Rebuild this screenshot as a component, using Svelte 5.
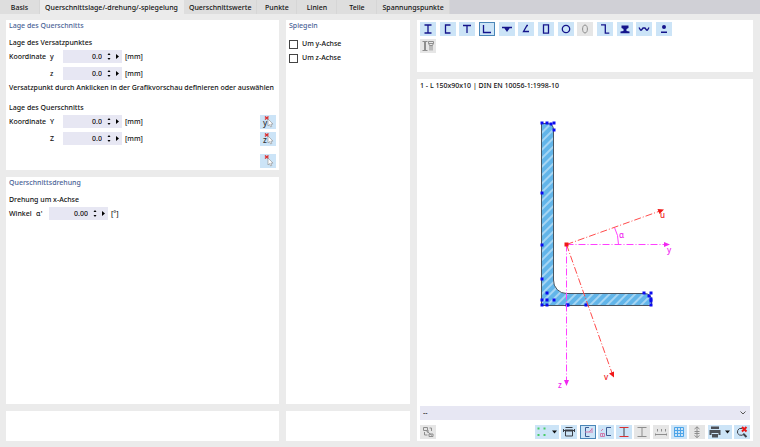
<script lang="ts">
  let activeTab = $state("Querschnittslage/-drehung/-spiegelung");
  let activeShape = $state("angle");
  let mirrorY = $state(false);
  let mirrorZ = $state(false);

  const tabs = [
    "Basis",
    "Querschnittslage/-drehung/-spiegelung",
    "Querschnittswerte",
    "Punkte",
    "Linien",
    "Teile",
    "Spannungspunkte",
  ];

  const offsetRows = [
    { id: "offset-y", label: "Koordinate", axis: "y" },
    { id: "offset-z", label: "", axis: "z" },
  ];
  const positionRows = [
    { id: "pos-y", label: "Koordinate", axis: "Y" },
    { id: "pos-z", label: "", axis: "Z" },
  ];

  // icons are drawn on a 16 x 14 grid
  const shapes = [
    { key: "i", name: "I-Profil", d: "M4.5 3h7M4.5 11h7M8 3v8" },
    { key: "channel", name: "U-Profil", d: "M10.5 3H5.5v8h5" },
    { key: "tee", name: "T-Profil", d: "M4 3.5h8M8 4v7" },
    { key: "angle", name: "Winkel", d: "M4.5 3v7.5H12" },
    { key: "tee-flat", name: "T flach", d: "M3 5.5h10M6 6l1.500 2h1l1.500-2M8 6v3.500" },
    { key: "angle-open", name: "Winkel offen", d: "M10 3.500H9L5.500 9.500H11" },
    { key: "rect", name: "Rechteckrohr", d: "M5.5 2.8h5v8.4h-5z" },
    { key: "round", name: "Rundrohr", d: "M8 3.3a3.7 3.7 0 1 1 0 7.4a3.7 3.7 0 1 1 0-7.4z" },
    { key: "oval", name: "Oval", d: "M8 3c3.2 0 3.2 8 0 8s-3.2-8 0-8z", off: true },
    { key: "zed", name: "Z-Profil", d: "M4 2.8h4.3v8.4h4" },
    { key: "rail", name: "Schiene", d: "M4.500 3.500h7v2.500L9.500 7v2l3 .5v1.700h-9V9.500l3-.5V7l-2-1z", solid: true },
    { key: "wave", name: "Trapezblech", d: "M3 5.500l1.500 2.500h1L7 6h2l1.500 2h1L13 5.500" },
    { key: "bulb", name: "Verbund", d: "M5 9.500h6v1.500H5zM8 3a2 2 0 1 1 0 4a2 2 0 1 1 0-4z", solid: true },
  ];

  const points = [
    [542, 123], [547, 123], [551, 124], [554, 123], [554, 130],
    [542, 193], [542, 245], [542, 279],
    [547, 293], [542, 300], [547, 300], [554, 300],
    [542, 305], [547, 305], [567, 305], [568, 305], [586, 305], [651, 305],
    [644, 293], [651, 293], [649, 296], [651, 299], [651, 301],
  ];
</script>

{#snippet numberField(id, value)}
  <div class="number">
    <input {id} type="text" {value} />
    <div class="spin">
      <button aria-label="Erhöhen"><svg viewBox="0 0 4 2"><path d="M.5 2L2 0l1.500 2z" /></svg></button>
      <button aria-label="Verringern"><svg viewBox="0 0 4 2"><path d="M.5 0L2 2 3.500 0z" /></svg></button>
    </div>
    <button class="more" aria-label="Mehr"><svg viewBox="0 0 3 5"><path d="M0 0l3 2.500L0 5z" /></svg></button>
  </div>
{/snippet}

{#snippet pickIcon(letter)}
  <svg class="icon" viewBox="0 0 16 14">
    {#if letter}<text class="glyph" x="3" y="11">{letter}</text>{/if}
    <path class="red strong" d="M5 1.500l3.500 3M8.500 1.500L5 4.500" />
    <path class="cursor" d="M8 4v7l1.600-1.400 1 2.400 1.200-.5-1-2.400h2.200z" />
  </svg>
{/snippet}

<div class="window">
  <div class="tabs" role="tablist">
    {#each tabs as tab (tab)}
      <button
        class="tab"
        class:active={activeTab === tab}
        role="tab"
        aria-selected={activeTab === tab}
        onclick={() => (activeTab = tab)}>{tab}</button>
    {/each}
  </div>

  <main class="columns">
    <div class="column">
      <section class="panel">
        <h2>Lage des Querschnitts</h2>
        <h3>Lage des Versatzpunktes</h3>
        <div class="rows">
          {#each offsetRows as row (row.id)}
            <div class="row">
              <label for={row.id}><span>{row.label}</span><span>{row.axis}</span></label>
              {@render numberField(row.id, "0.0")}
              <span class="unit">[mm]</span>
            </div>
          {/each}
        </div>
        <p>Versatzpunkt durch Anklicken in der Grafikvorschau definieren oder auswählen</p>
        <h3 class="spaced">Lage des Querschnitts</h3>
        <div class="rows">
          {#each positionRows as row (row.id)}
            <div class="row">
              <label for={row.id}><span>{row.label}</span><span>{row.axis}</span></label>
              {@render numberField(row.id, "0.0")}
              <span class="unit">[mm]</span>
              <button class="tool pick" aria-label="Wählen {row.axis}">
                {@render pickIcon(row.axis.toLowerCase())}
              </button>
            </div>
          {/each}
        </div>
        <div class="row last">
          <button class="tool pick" aria-label="Punkt wählen">{@render pickIcon("")}</button>
        </div>
      </section>

      <section class="panel grow">
        <h2>Querschnittsdrehung</h2>
        <h3>Drehung um x-Achse</h3>
        <div class="rows">
          <div class="row">
            <label class="short" for="angle"><span>Winkel</span><span>α'</span></label>
            {@render numberField("angle", "0.00")}
            <span class="unit">[°]</span>
          </div>
        </div>
      </section>

      <section class="panel foot"></section>
    </div>

    <div class="column">
      <section class="panel grow">
        <h2>Spiegeln</h2>
        <div class="checks">
          <label class="check"><input type="checkbox" bind:checked={mirrorY} />Um y-Achse</label>
          <label class="check"><input type="checkbox" bind:checked={mirrorZ} />Um z-Achse</label>
        </div>
      </section>
      <section class="panel foot"></section>
    </div>

    <div class="column">
      <section class="panel shapes">
        <div class="shape-row">
          {#each shapes as s (s.key)}
            <button
              class="tool"
              class:selected={activeShape === s.key}
              disabled={s.off}
              aria-label={s.name}
              onclick={() => (activeShape = s.key)}
            >
              <svg class="icon navy" class:solid={s.solid} class:muted={s.off} viewBox="0 0 16 14">
                <path d={s.d} />
              </svg>
            </button>
          {/each}
        </div>
        <button class="tool" disabled aria-label="Zusammengesetzt">
          <svg class="icon muted" viewBox="0 0 16 14">
            <path d="M2.500 2.500h5M2.500 11.500h5M4.500 3v8M5.500 3v8M8.500 2.500h5v2l-1.500 2.500v4.500M8.500 2.500v2l1.500 2.500v4.500M8.500 4.500h5M10 6.500h2" />
          </svg>
        </button>
      </section>

      <section class="panel grow preview">
        <div class="caption">1 - L 150x90x10 | DIN EN 10056-1:1998-10</div>
        <svg class="drawing" viewBox="420 92 330 314">
          <defs>
            <pattern id="hatch" width="6" height="6" patternUnits="userSpaceOnUse" patternTransform="rotate(45)">
              <rect width="6" height="6" fill="#62b5e9" />
              <path d="M3 0v6" stroke="#e8f5fd" stroke-width="1" />
            </pattern>
          </defs>
          <path
            class="profile"
            d="M541.5 123.500H547Q553.500 123.500 553.500 130V280A13 13 0 0 0 566.500 293.500H644Q651.500 293.500 651.500 300V305.500H541.500Z"
          />
          {#each points as [x, y]}
            <rect class="point" x={x - 1.5} y={y - 1.5} width="3" height="3" />
          {/each}
          <g class="axis magenta">
            <path d="M566.500 244.500H666M566.500 244.500V381" />
            <path class="head" d="M670 244.500l-6-2.500v5zM566.500 386l-2.500-6h5z" />
            <path class="arc" d="M614.500 227.500Q618.500 235 618.500 244.500" />
            <text x="619" y="238">α</text>
            <text x="667" y="253">y</text>
            <text x="558" y="388">z</text>
          </g>
          <g class="axis red-axis">
            <path d="M566.500 244.500L660 211M566.500 244.500L612 373" />
            <path class="head" d="M664 209.500l-6.500-.5 2 5zM614 377.500l-5-4 5-2z" />
            <rect class="head" x="564.500" y="242.500" width="4" height="4" />
            <text x="660" y="218">u</text>
            <text x="604" y="380">v</text>
          </g>
        </svg>

        <div class="combo">
          <select aria-label="Darstellung">
            <option>--</option>
          </select>
          <svg viewBox="0 0 6 4"><path d="M.5.500L3 3 5.500.500" /></svg>
        </div>

        <div class="actions">
          <button class="tool" disabled aria-label="Tauschen">
            <svg class="icon muted" viewBox="0 0 16 14">
              <path d="M3.500 2.500h4v3h-4zM9.500 3h2v3M8 5v3M4.500 7v3h3M9 9h4v2.500H9zM6 5.500l6 5" />
            </svg>
          </button>
          <div class="view-tools">
            <button class="tool wide" aria-label="Punkte">
              <svg class="icon" viewBox="0 0 24 14">
                <path class="green" d="M2.500 3.500h2M8.500 3.500h2M2.500 10h2M8.500 10h2" />
                <path class="black" d="M17 5.500h5L19.500 8.500z" />
              </svg>
            </button>
            <button class="tool" aria-label="Bemaßung">
              <svg class="icon" viewBox="0 0 16 14">
                <path class="dark" d="M4.500 2.500h7M2.500 5.500h11M2.500 4v3M13.500 4v3M4.500 6v5h7V6" />
                <path class="dark thick" d="M4 5.500h8" />
              </svg>
            </button>
            <button class="tool selected" aria-label="Achsen">
              <svg class="icon" viewBox="0 0 16 14">
                <path class="blue" d="M9 2.500H5.500v9h4" />
                <path class="pink" d="M5 7h8M9 7l3-3M12 3v3" />
              </svg>
            </button>
            <button class="tool" aria-label="Schubmittelpunkt">
              <svg class="icon" viewBox="0 0 16 14">
                <path class="blue" d="M13 2.500H8.500v8H13" />
                <path class="pink" d="M3 6l2-2M2.500 8.500h4v3h-4zM4.500 8v4" />
              </svg>
            </button>
            <button class="tool" aria-label="Profil">
              <svg class="icon" viewBox="0 0 16 14">
                <path class="dark" d="M8 3v8" />
                <path class="red" d="M3.500 2.500h9M3.500 11.500h9" />
              </svg>
            </button>
            <button class="tool" disabled aria-label="Teile">
              <svg class="icon muted" viewBox="0 0 16 14"><path d="M3.500 2.500h9M3.500 11.500h9M8 3v8" /></svg>
            </button>
            <button class="tool" disabled aria-label="Nummern">
              <svg class="icon muted" viewBox="0 0 16 14">
                <path d="M4.500 4v2.500M8.500 4v2.500M12.500 4v2.500M2.500 9.500h11M2.500 8.500v2M13.500 8.500v2" />
              </svg>
            </button>
            <button class="tool" aria-label="Raster">
              <svg class="icon" viewBox="0 0 16 14">
                <path class="grid-lines" d="M3.500 2.500h9v9h-9zM6.500 2.500v9M9.500 2.500v9M3.500 5.500h9M3.500 8.500h9" />
              </svg>
            </button>
            <button class="tool" disabled aria-label="Spannungen">
              <svg class="icon muted" viewBox="0 0 16 14">
                <path d="M8 1.500v11M5.500 4L8 2l2.500 2M5.500 6.500h5M5.500 8.500h5M5.500 10.500l2.500 2 2.500-2" />
              </svg>
            </button>
            <button class="tool wide" aria-label="Drucken">
              <svg class="icon" viewBox="0 0 24 14">
                <path class="print" d="M3 1.500h8V4H3zM1.500 5h11v5h-2V8h-7v2h-2zM4 9h6v3.500H4z" />
                <path class="black" d="M17 5.500h5L19.500 8.500z" />
              </svg>
            </button>
            <button class="tool" aria-label="Auswahl aufheben">
              <svg class="icon" viewBox="0 0 16 14">
                <path class="dark" d="M10 8.500A3.500 3.500 0 1 1 8 3.500" />
                <path class="dark thick" d="M9.500 9l3 3" />
                <path class="cross" d="M8 2l4.500 4.500M12.500 2L8 6.500" />
              </svg>
            </button>
          </div>
        </div>
      </section>
    </div>
  </main>
</div>

<style>
  :global(body) {
    background: #ebebeb;
  }

  .window {
    display: flex;
    flex-direction: column;
    box-sizing: border-box;
    min-height: 100vh;
    font-family: "Noto Sans", "Open Sans", sans-serif;
    font-size: 7px;
    font-weight: 500;
    line-height: 12px;
    color: #111;
  }

  button,
  input,
  select {
    margin: 0;
    padding: 0;
    border: 0;
    font: inherit;
    color: inherit;
    background: none;
  }

  /* Tabs */
  .tabs {
    display: flex;
    background: #d0d0d6;
  }
  .tab {
    box-sizing: border-box;
    min-width: 40px;
    height: 14px;
    padding: 2px 5px 0;
    border-right: 1px solid #d6d6d6;
    background: #dedede;
  }
  .tab.active {
    border-color: #ebebeb;
    background: #ebebeb;
  }

  /* Panels */
  .columns {
    flex: 1;
    display: grid;
    grid-template-columns: 273fr 124fr 336fr;
    gap: 7px;
    padding: 6px 7px 6px 6px;
  }
  .column {
    display: flex;
    flex-direction: column;
    gap: 7px;
    min-width: 0;
  }
  .panel {
    padding: 0 3px 3px;
    background: #fff;
  }
  .grow {
    flex: 1;
  }
  .foot {
    height: 27px;
  }

  h2,
  h3,
  p {
    margin: 0;
    font-size: inherit;
    font-weight: inherit;
    white-space: nowrap;
  }
  h2 {
    color: #4a6396;
  }
  h3 {
    margin-top: 5px;
  }
  p {
    margin-top: 2px;
  }
  .spaced {
    margin-top: 8px;
  }

  /* Number rows */
  .rows {
    display: grid;
    gap: 4px;
    margin-top: 1px;
  }
  .row {
    display: flex;
    align-items: center;
    height: 13px;
  }
  .row label {
    display: grid;
    grid-template-columns: 41px 13px;
  }
  .row .short {
    grid-template-columns: 27px 13px;
  }
  .number {
    display: flex;
    align-items: center;
    width: 59px;
    height: 13px;
    background: #e7e7f3;
  }
  .number input {
    flex: 1;
    width: 0;
    height: 13px;
    text-align: right;
  }
  .spin {
    display: grid;
    gap: 3px;
    margin: 0 5px;
  }
  .spin button {
    display: flex;
  }
  .spin svg {
    width: 4px;
    height: 2px;
  }
  .more {
    display: flex;
    margin-right: 3px;
  }
  .more svg {
    width: 3px;
    height: 5px;
  }
  .unit {
    margin-left: 3px;
  }
  .last {
    margin-top: 9px;
  }

  /* Check boxes */
  .checks {
    display: grid;
    gap: 2px;
    margin-top: 6px;
  }
  .check {
    display: flex;
    align-items: center;
    gap: 4px;
  }
  .check input {
    appearance: none;
    box-sizing: border-box;
    width: 9px;
    height: 9px;
    border: 1px solid #444;
    background: #fff;
  }
  .check input:checked {
    background: #1a1a8c;
  }

  /* Icon buttons */
  .tool {
    display: flex;
    flex: none;
    width: 16px;
    height: 14px;
    background: #cce4f7;
  }
  .wide {
    width: 24px;
  }
  .tool:disabled {
    background: #e6e6e6;
  }
  .selected {
    outline: 1px solid #4a86b8;
    outline-offset: -1px;
  }
  .pick {
    margin-left: auto;
  }
  .icon {
    width: 100%;
    height: 100%;
    fill: none;
  }
  .navy {
    stroke: #14148c;
    stroke-width: 1.3;
  }
  .solid {
    fill: #14148c;
    stroke: none;
  }
  .muted {
    stroke: #8e8e8e;
    stroke-width: 1;
  }
  .dark {
    stroke: #3c4048;
  }
  .thick {
    stroke-width: 2;
  }
  .blue {
    stroke: #3c5c94;
  }
  .pink {
    stroke: #d07cae;
  }
  .green {
    stroke: #48cc68;
    stroke-width: 2;
  }
  .red {
    stroke: #dc3030;
  }
  .strong {
    stroke-width: 1.5;
  }
  .cross {
    stroke: #e81818;
    stroke-width: 2;
  }
  .grid-lines {
    stroke: #4ca4e8;
  }
  .black {
    fill: #111;
  }
  .print {
    fill: #4c5058;
  }
  .cursor {
    fill: #fff;
    stroke: #8c8c8c;
    stroke-width: 0.6;
  }
  .glyph {
    fill: #333;
    font-size: 8px;
  }

  /* Section picker */
  .shapes {
    box-sizing: border-box;
    display: grid;
    align-content: start;
    gap: 3px;
    height: 52px;
    padding-top: 2px;
  }
  .shape-row {
    display: flex;
    justify-content: space-between;
    max-width: 252px;
  }

  /* Preview */
  .preview {
    display: flex;
    flex-direction: column;
    padding: 1px 3px 2px;
  }
  .drawing {
    flex: 1;
    width: 100%;
    min-height: 0;
  }
  .profile {
    fill: url(#hatch);
    stroke: #4a5560;
  }
  .point {
    fill: #0a0af0;
  }
  .axis path {
    fill: none;
    stroke-dasharray: 7 2 1 2;
  }
  .axis .arc {
    stroke-dasharray: none;
  }
  .axis text {
    font-size: 8px;
  }
  .magenta {
    stroke: #ff40ff;
  }
  .red-axis {
    stroke: #ff4c4c;
  }
  .magenta text,
  .magenta .head {
    fill: #f028f0;
    stroke: none;
  }
  .red-axis text,
  .red-axis .head {
    fill: #f01818;
    stroke: none;
  }

  .combo {
    display: grid;
    grid-template-columns: 1fr 10px;
    align-items: center;
    height: 14px;
    background: #e7e7f3;
  }
  .combo select {
    grid-area: 1 / 1 / 2 / 3;
    appearance: none;
    height: 14px;
    padding-left: 3px;
  }
  .combo svg {
    grid-area: 1 / 2;
    width: 6px;
    height: 4px;
    fill: none;
    stroke: #555;
    pointer-events: none;
  }

  .actions {
    display: flex;
    justify-content: space-between;
    margin-top: 5px;
  }
  .view-tools {
    display: flex;
    flex: 0 1 215px;
    justify-content: space-between;
  }
</style>
